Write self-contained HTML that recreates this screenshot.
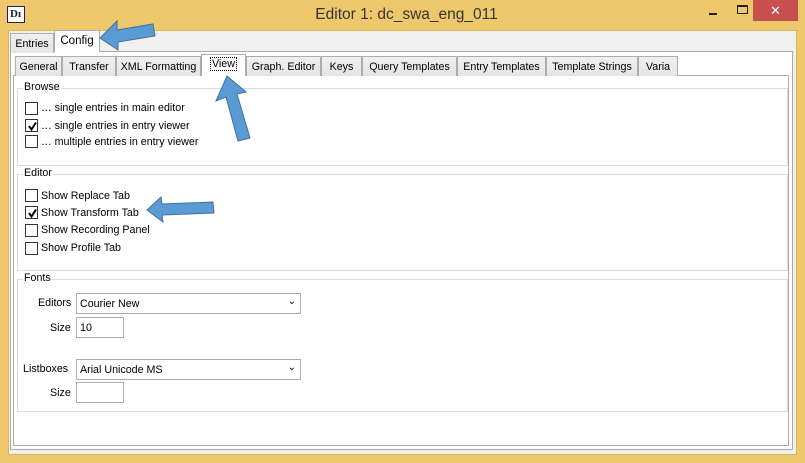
<!DOCTYPE html>
<html><head><style>
*{box-sizing:border-box;margin:0;padding:0}
body{width:805px;height:463px;background:#f0c86c;position:relative;overflow:hidden;font-family:"Liberation Sans",sans-serif;font-size:10.7px;color:#000}
.a{position:absolute}
.title{left:0;top:6px;width:805px;text-align:center;font-size:15.5px;color:#333;padding-left:8px}
.client{left:8px;top:30px;width:789px;height:425px;background:#f0f0f0;border:1px solid #d8b65a}
.tab{position:absolute;height:20px;border:1px solid #acacac;border-bottom:none;background:linear-gradient(#f0f0f0,#e5e5e5);padding:4px 0 0;text-align:center;white-space:nowrap;font-size:10.7px}
.pan{position:absolute;background:#fff;border:1px solid #acacac}
.grp{position:absolute;border:1px solid #dcdcdc}
.gl{position:absolute;top:-8px;left:5px;background:#fff;padding:0 1px;font-size:10.7px}
.cb{position:absolute;width:13px;height:13px;border:1px solid #333;background:#fff}
.lb{position:absolute;font-size:10.7px;white-space:nowrap}
.sel{position:absolute;height:21px;border:1px solid #acacac;background:#fff;font-size:10.7px;padding:4px 0 0 3px}
.chk{position:absolute;left:1px;top:1px}
</style></head><body>
<div class="a" style="left:7px;top:6px;width:18px;height:17px;border:1px solid #224;background:#fff;font:bold 11px 'Liberation Serif',serif;color:#223;padding-left:2px;line-height:15px">Dı</div>
<div class="a title">Editor 1: dc_swa_eng_011</div>
<div class="a" style="left:709px;top:13px;width:8px;height:2px;background:#222"></div>
<div class="a" style="left:737px;top:5px;width:11px;height:9px;border:1px solid #222;border-top-width:2px"></div>
<div class="a" style="left:753px;top:0;width:45px;height:21px;background:#c7504f;color:#fff;text-align:center;font-size:13px;line-height:21px">✕</div>
<div class="a client"></div>
<div class="pan" style="left:10px;top:51px;width:783px;height:399px;background:#fff"></div>
<div class="tab" style="left:10px;top:33px;width:44px">Entries</div>
<div class="tab" style="left:54px;top:30px;width:46px;height:22px;background:#fff;font-size:11.5px">Config</div>
<div class="pan" style="left:13px;top:75px;width:776px;height:371px"></div>
<div class="tab" style="left:15px;top:56px;width:47px">General</div>
<div class="tab" style="left:62px;top:56px;width:54px">Transfer</div>
<div class="tab" style="left:116px;top:56px;width:85px">XML Formatting</div>
<div class="tab" style="left:201px;top:54px;width:45px;height:22px;background:#fff;padding-top:3px"><span style="border:1px dotted #000;padding:0 1px">View</span></div>
<div class="tab" style="left:246px;top:56px;width:75px">Graph. Editor</div>
<div class="tab" style="left:321px;top:56px;width:41px">Keys</div>
<div class="tab" style="left:362px;top:56px;width:95px">Query Templates</div>
<div class="tab" style="left:457px;top:56px;width:89px">Entry Templates</div>
<div class="tab" style="left:546px;top:56px;width:92px">Template Strings</div>
<div class="tab" style="left:638px;top:56px;width:40px">Varia</div>

<div class="grp" style="left:17px;top:88px;width:771px;height:78px"><span class="gl">Browse</span></div>
<div class="cb" style="left:25px;top:102px"></div><div class="lb" style="left:41px;top:102px">… single entries in main editor</div>
<div class="cb" style="left:25px;top:119px"><svg class="chk" width="11" height="11"><path d="M2 5 L4.5 8.5 L9 1.5" fill="none" stroke="#000" stroke-width="2"/></svg></div><div class="lb" style="left:41px;top:120px">… single entries in entry viewer</div>
<div class="cb" style="left:25px;top:135px"></div><div class="lb" style="left:41px;top:136px">… multiple entries in entry viewer</div>

<div class="grp" style="left:17px;top:174px;width:771px;height:97px"><span class="gl">Editor</span></div>
<div class="cb" style="left:25px;top:189px"></div><div class="lb" style="left:41px;top:190px">Show Replace Tab</div>
<div class="cb" style="left:25px;top:206px"><svg class="chk" width="11" height="11"><path d="M2 5 L4.5 8.5 L9 1.5" fill="none" stroke="#000" stroke-width="2"/></svg></div><div class="lb" style="left:41px;top:207px">Show Transform Tab</div>
<div class="cb" style="left:25px;top:224px"></div><div class="lb" style="left:41px;top:224px">Show Recording Panel</div>
<div class="cb" style="left:25px;top:242px"></div><div class="lb" style="left:41px;top:242px">Show Profile Tab</div>

<div class="grp" style="left:17px;top:279px;width:771px;height:133px"><span class="gl">Fonts</span></div>
<div class="lb" style="left:38px;top:297px">Editors</div>
<div class="sel" style="left:76px;top:293px;width:225px">Courier New<span style="position:absolute;right:4px;top:2px;font-size:10px">⌄</span></div>
<div class="lb" style="left:50px;top:322px">Size</div>
<div class="sel" style="left:76px;top:317px;width:48px">10</div>
<div class="lb" style="left:23px;top:363px">Listboxes</div>
<div class="sel" style="left:76px;top:359px;width:225px">Arial Unicode MS<span style="position:absolute;right:4px;top:2px;font-size:10px">⌄</span></div>
<div class="lb" style="left:50px;top:387px">Size</div>
<div class="sel" style="left:76px;top:382px;width:48px"></div>

<svg class="a" style="left:0;top:0" width="805" height="463">
<g fill="#5b9bd5" stroke="#41719c" stroke-width="1">
<polygon points="100,38 117,21 117,30 153,24 155,36 118,42 118,50"/>
<polygon points="227,76 246,92 237,94 250,138 238,141 226,97 216,101"/>
<polygon points="147,210 161,197 162,204 213,202 214,213 162,215 163,222"/>
</g></svg>
</body></html>
